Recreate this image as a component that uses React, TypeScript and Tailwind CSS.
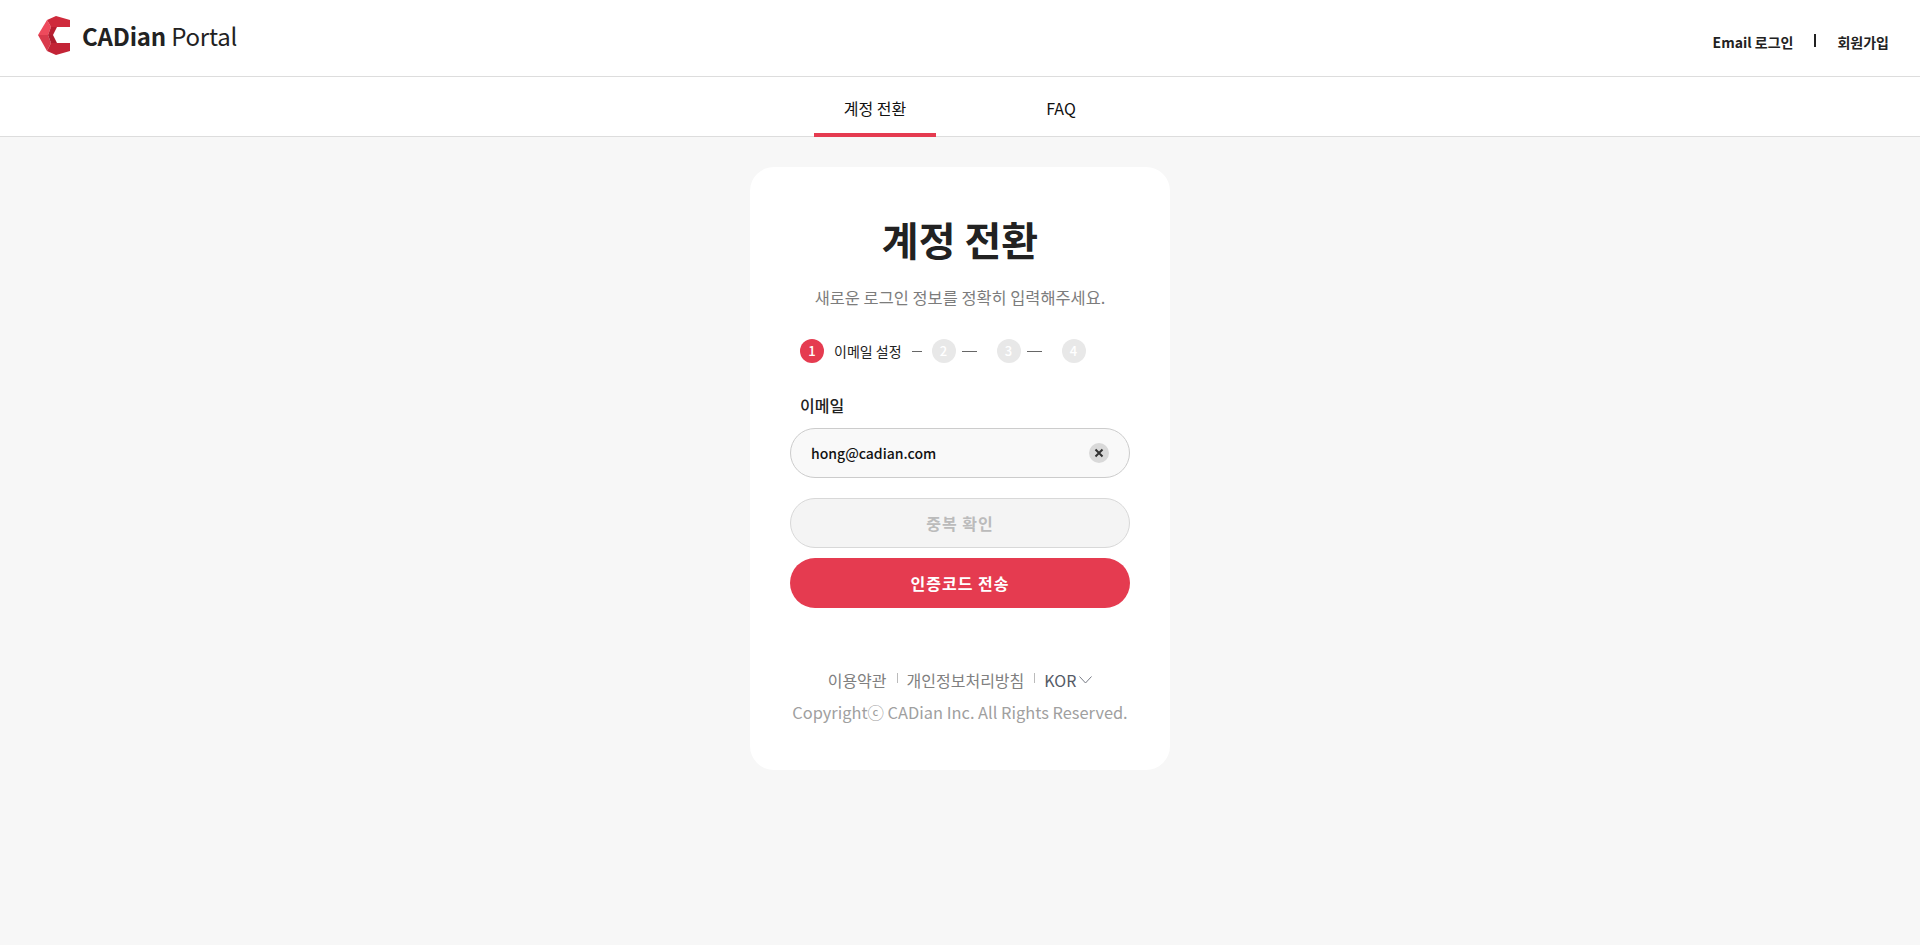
import React from 'react';

const fontStack = "font-['Noto_Sans_CJK_KR','Noto_Sans',sans-serif]";

const Logo = () => (
  <svg width="32" height="39" viewBox="0 0 32 39" className="block">
    <polygon points="0,19 9,4 13,11 10,19" fill="#ee4a5c" />
    <polygon points="0,19 10,19 13,27 9,35" fill="#d93a4c" />
    <polygon points="9,4 18,0 32,4 32,11 19,11 13,11" fill="#cf2a3c" />
    <polygon points="9,35 18,39 32,35 32,27 19,27 13,27" fill="#c32436" />
    <polygon points="13,11 19,11 15,19 10,19" fill="#b81f31" />
    <polygon points="10,19 15,19 19,27 13,27" fill="#ad1c2d" />
  </svg>
);

const Step = ({ n, active }: { n: number; active?: boolean }) => (
  <div
    className={`w-6 h-6 rounded-full flex items-center justify-center text-[13px] font-medium text-white shrink-0 ${
      active ? 'bg-[#e53b50]' : 'bg-[#e8e8e8]'
    }`}
  >
    {n}
  </div>
);

const Dash = ({ w }: { w: string }) => <div className={`h-px bg-[#666666] shrink-0 ${w}`} />;

const App: React.FC = () => {
  return (
    <div className={`min-h-[945px] bg-[#f7f7f7] text-[#222222] ${fontStack}`}>
      {/* Header */}
      <header className="h-[77px] bg-white border-b border-[#dddddd] flex items-start justify-between pl-[38px] pr-[31px]">
        <div className="flex items-center gap-[12px] pt-[16px]">
          <Logo />
          <div className="text-[24px] leading-[39px] text-[#222222] tracking-[-0.2px]">
            <span className="font-bold">CADian</span> <span className="font-normal">Portal</span>
          </div>
        </div>
        <div className="flex items-center pt-[31px] text-[14px] leading-[22px] font-semibold">
          <span>Email 로그인</span>
          <span className="w-[2px] h-[13px] bg-[#222222] mx-[21px] -mt-[4px]" />
          <span>회원가입</span>
        </div>
      </header>

      {/* Tabs */}
      <nav className="h-[60px] bg-white border-b border-[#dddddd] flex justify-center gap-[64px] pl-[16px] text-[16px] text-[#111111]">
        <div className="w-[122px] h-[60px] flex items-start justify-center pt-[19px] border-b-4 border-[#e53b50]">계정 전환</div>
        <div className="w-[122px] h-[59px] flex items-start justify-center pt-[19px]">FAQ</div>
      </nav>

      {/* Card */}
      <main className="flex justify-center pt-[30px]">
        <div className="w-[420px] h-[603px] bg-white rounded-[24px] px-[40px] pt-[43px] flex flex-col">
          <h1 className="text-[40px] leading-[58px] font-bold text-center text-[#222222]">계정 전환</h1>
          <p className="mt-[17px] text-[16.4px] leading-[24px] text-center text-[#7c7c7c]">새로운 로그인 정보를 정확히 입력해주세요.</p>

          <div className="mt-[30px] pl-[10px] flex items-center">
            <Step n={1} active />
            <span className="ml-[10px] text-[14px] leading-[20px] text-[#222222]">이메일 설정</span>
            <Dash w="w-[10px] ml-[10px]" />
            <div className="ml-[10px]"><Step n={2} /></div>
            <Dash w="w-[15px] ml-[6px]" />
            <div className="ml-[20px]"><Step n={3} /></div>
            <Dash w="w-[15px] ml-[6px]" />
            <div className="ml-[20px]"><Step n={4} /></div>
          </div>

          <label className="mt-[30px] pl-[10px] text-[16px] leading-[24px] font-medium text-[#222222]">이메일</label>

          <div className="mt-[11px] h-[50px] rounded-full border border-[#cccccc] bg-[#f9f9f9] flex items-center justify-between pl-[20px] pr-[20px]">
            <span className="text-[14px] font-medium text-[#111111]">hong@cadian.com</span>
            <span className="w-5 h-5 rounded-full bg-[#d9d9d9] flex items-center justify-center">
              <svg width="10" height="10" viewBox="0 0 10 10">
                <path d="M1.5 1.5 L8.5 8.5 M8.5 1.5 L1.5 8.5" stroke="#333333" strokeWidth="2" />
              </svg>
            </span>
          </div>

          <button className="mt-[20px] h-[50px] rounded-full border border-[#d8d8d8] bg-[#f4f4f4] text-[16px] font-bold text-[#bbbbbb] tracking-[1px]">중복 확인</button>
          <button className="mt-[10px] h-[50px] rounded-full bg-[#e53b50] text-[16px] font-bold text-white tracking-[1px]">인증코드 전송</button>

          <div className="mt-[60px] flex items-center justify-center text-[16px] leading-[24px] text-[#808080]">
            <span>이용약관</span>
            <span className="w-px h-[10px] bg-[#bbbbbb] ml-[10px] mr-[9px] -mt-[4px]" />
            <span>개인정보처리방침</span>
            <span className="w-px h-[10px] bg-[#bbbbbb] ml-[10px] mr-[9px] -mt-[4px]" />
            <span className="text-[#555a66]">KOR</span>
            <svg width="13" height="8" viewBox="0 0 13 8" className="ml-[3px]">
              <path d="M0.5 0.5 L6.5 7 L12.5 0.5" fill="none" stroke="#777b85" strokeWidth="1" />
            </svg>
          </div>
          <div className="mt-[8px] text-center text-[16.4px] leading-[24px] text-[#a0a0a0]">Copyrightⓒ CADian Inc. All Rights Reserved.</div>
        </div>
      </main>
    </div>
  );
};

export default App;
